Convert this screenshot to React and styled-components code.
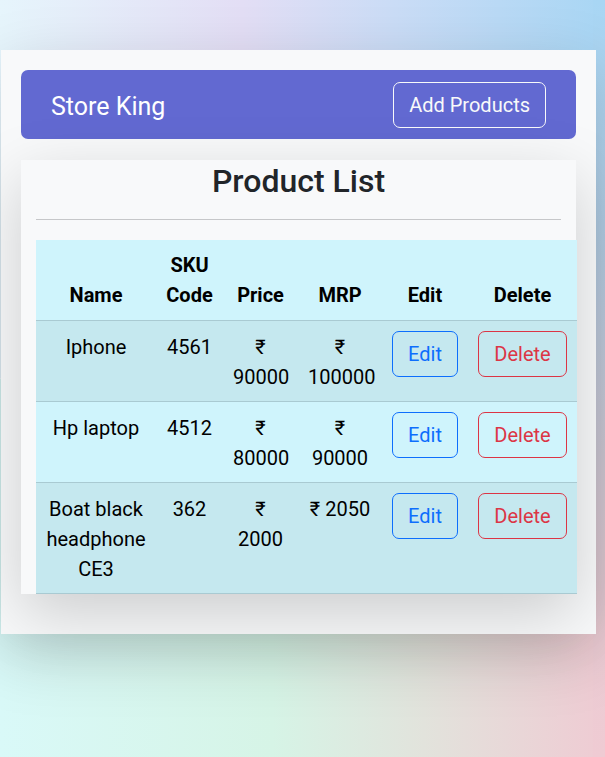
import React from 'react';
import styled, { createGlobalStyle } from 'styled-components';

const GlobalStyle = createGlobalStyle`
  *, *::before, *::after { box-sizing: border-box; }
  html, body { margin: 0; padding: 0; }
  body {
    font-family: Roboto, "Noto Sans", "DejaVu Sans", sans-serif;
    font-size: 20px;
    line-height: 1.5;
    color: #212529;
  }
`;

const Page = styled.div`
  min-height: 100vh;
  padding: 50px 9px 0 1px;
  background:
    linear-gradient(180deg, #a8d6f4 0%, #b6d2ea 30%, #d2ccd8 60%, #ecccd4 85%, #efcbd3 100%) right top / 12px 100% no-repeat,
    linear-gradient(90deg, #e6f5fc 0%, #e3def5 40%, #cadcf6 65%, #a8d6f4 100%) top / 100% 50% no-repeat,
    linear-gradient(90deg, #d9f9f8 0%, #d6f4e6 45%, #e2e3dc 70%, #efcbd3 100%) bottom / 100% 50% no-repeat;
`;

const Container = styled.div`
  background: #f8f9fa;
  padding: 20px 20px 40px;
  box-shadow: 0 20px 60px rgba(0, 0, 0, 0.175);
`;

const Navbar = styled.nav`
  display: flex;
  align-items: center;
  justify-content: space-between;
  height: 69px;
  padding: 0 30px;
  background: #6269d1;
  border-radius: 7px;
`;

const Brand = styled.span`
  color: #fff;
  font-size: 25px;
  line-height: 1.5;
  padding-top: 4px;
`;

const OutlineButton = styled.button`
  display: ${(p) => (p.$block ? 'block' : 'inline-block')};
  margin: ${(p) => (p.$block ? '0 auto' : '0')};
  font-family: inherit;
  font-size: 20px;
  line-height: 30px;
  padding: 7px 15px;
  background: transparent;
  color: ${(p) => p.$color};
  border: 1px solid ${(p) => p.$color};
  border-radius: 7px;
  cursor: pointer;
`;

const Card = styled.section`
  margin-top: 21px;
  background: #f8f9fa;
  padding: 2px 15px 0;
  box-shadow: 0 20px 60px rgba(0, 0, 0, 0.175);
`;

const Title = styled.h2`
  margin: 0;
  font-size: 32px;
  font-weight: 500;
  line-height: 1.2;
  text-align: center;
  color: #212529;
`;

const Divider = styled.hr`
  margin: 19px 0 20px;
  border: 0;
  border-top: 1px solid #c6c7c9;
`;

const Table = styled.table`
  width: 541px;
  table-layout: fixed;
  border-collapse: collapse;
  text-align: center;
  vertical-align: top;
  color: #000;
`;

const Col = styled.col`
  width: ${(p) => p.$w}px;
`;

const HeadCell = styled.th`
  padding: 10px;
  font-weight: 700;
  line-height: 30px;
  vertical-align: bottom;
  background: #cff4fc;
  border-bottom: 1px solid #a9cad2;
`;

const Row = styled.tr`
  background: ${(p) => (p.$striped ? '#c5e8ef' : '#cff4fc')};
`;

const Cell = styled.td`
  padding: 11px 10px 9px;
  line-height: 30px;
  vertical-align: top;
  border-bottom: 1px solid #a9cad2;
`;

const ActionCell = styled(Cell)`
  padding: 10px;
`;

const products = [
  { name: 'Iphone', sku: '4561', price: '90000', mrp: '100000' },
  { name: 'Hp laptop', sku: '4512', price: '80000', mrp: '90000' },
  { name: 'Boat black headphone CE3', sku: '362', price: '2000', mrp: '2050' },
];

const widths = [120, 67, 75, 84, 86, 109];

export default function App() {
  return (
    <>
      <GlobalStyle />
      <Page>
        <Container>
          <Navbar>
            <Brand>Store King</Brand>
            <OutlineButton $color="#f8f9fa">Add Products</OutlineButton>
          </Navbar>
          <Card>
            <Title>Product List</Title>
            <Divider />
            <Table>
              <colgroup>
                {widths.map((w, i) => (
                  <Col key={i} $w={w} />
                ))}
              </colgroup>
              <thead>
                <tr>
                  <HeadCell>Name</HeadCell>
                  <HeadCell>SKU Code</HeadCell>
                  <HeadCell>Price</HeadCell>
                  <HeadCell>MRP</HeadCell>
                  <HeadCell>Edit</HeadCell>
                  <HeadCell>Delete</HeadCell>
                </tr>
              </thead>
              <tbody>
                {products.map((p, i) => (
                  <Row key={p.sku} $striped={i % 2 === 0}>
                    <Cell>{p.name}</Cell>
                    <Cell>{p.sku}</Cell>
                    <Cell>₹ {p.price}</Cell>
                    <Cell>₹ {p.mrp}</Cell>
                    <ActionCell>
                      <OutlineButton $block $color="#0d6efd">Edit</OutlineButton>
                    </ActionCell>
                    <ActionCell>
                      <OutlineButton $block $color="#dc3545">Delete</OutlineButton>
                    </ActionCell>
                  </Row>
                ))}
              </tbody>
            </Table>
          </Card>
        </Container>
      </Page>
    </>
  );
}
